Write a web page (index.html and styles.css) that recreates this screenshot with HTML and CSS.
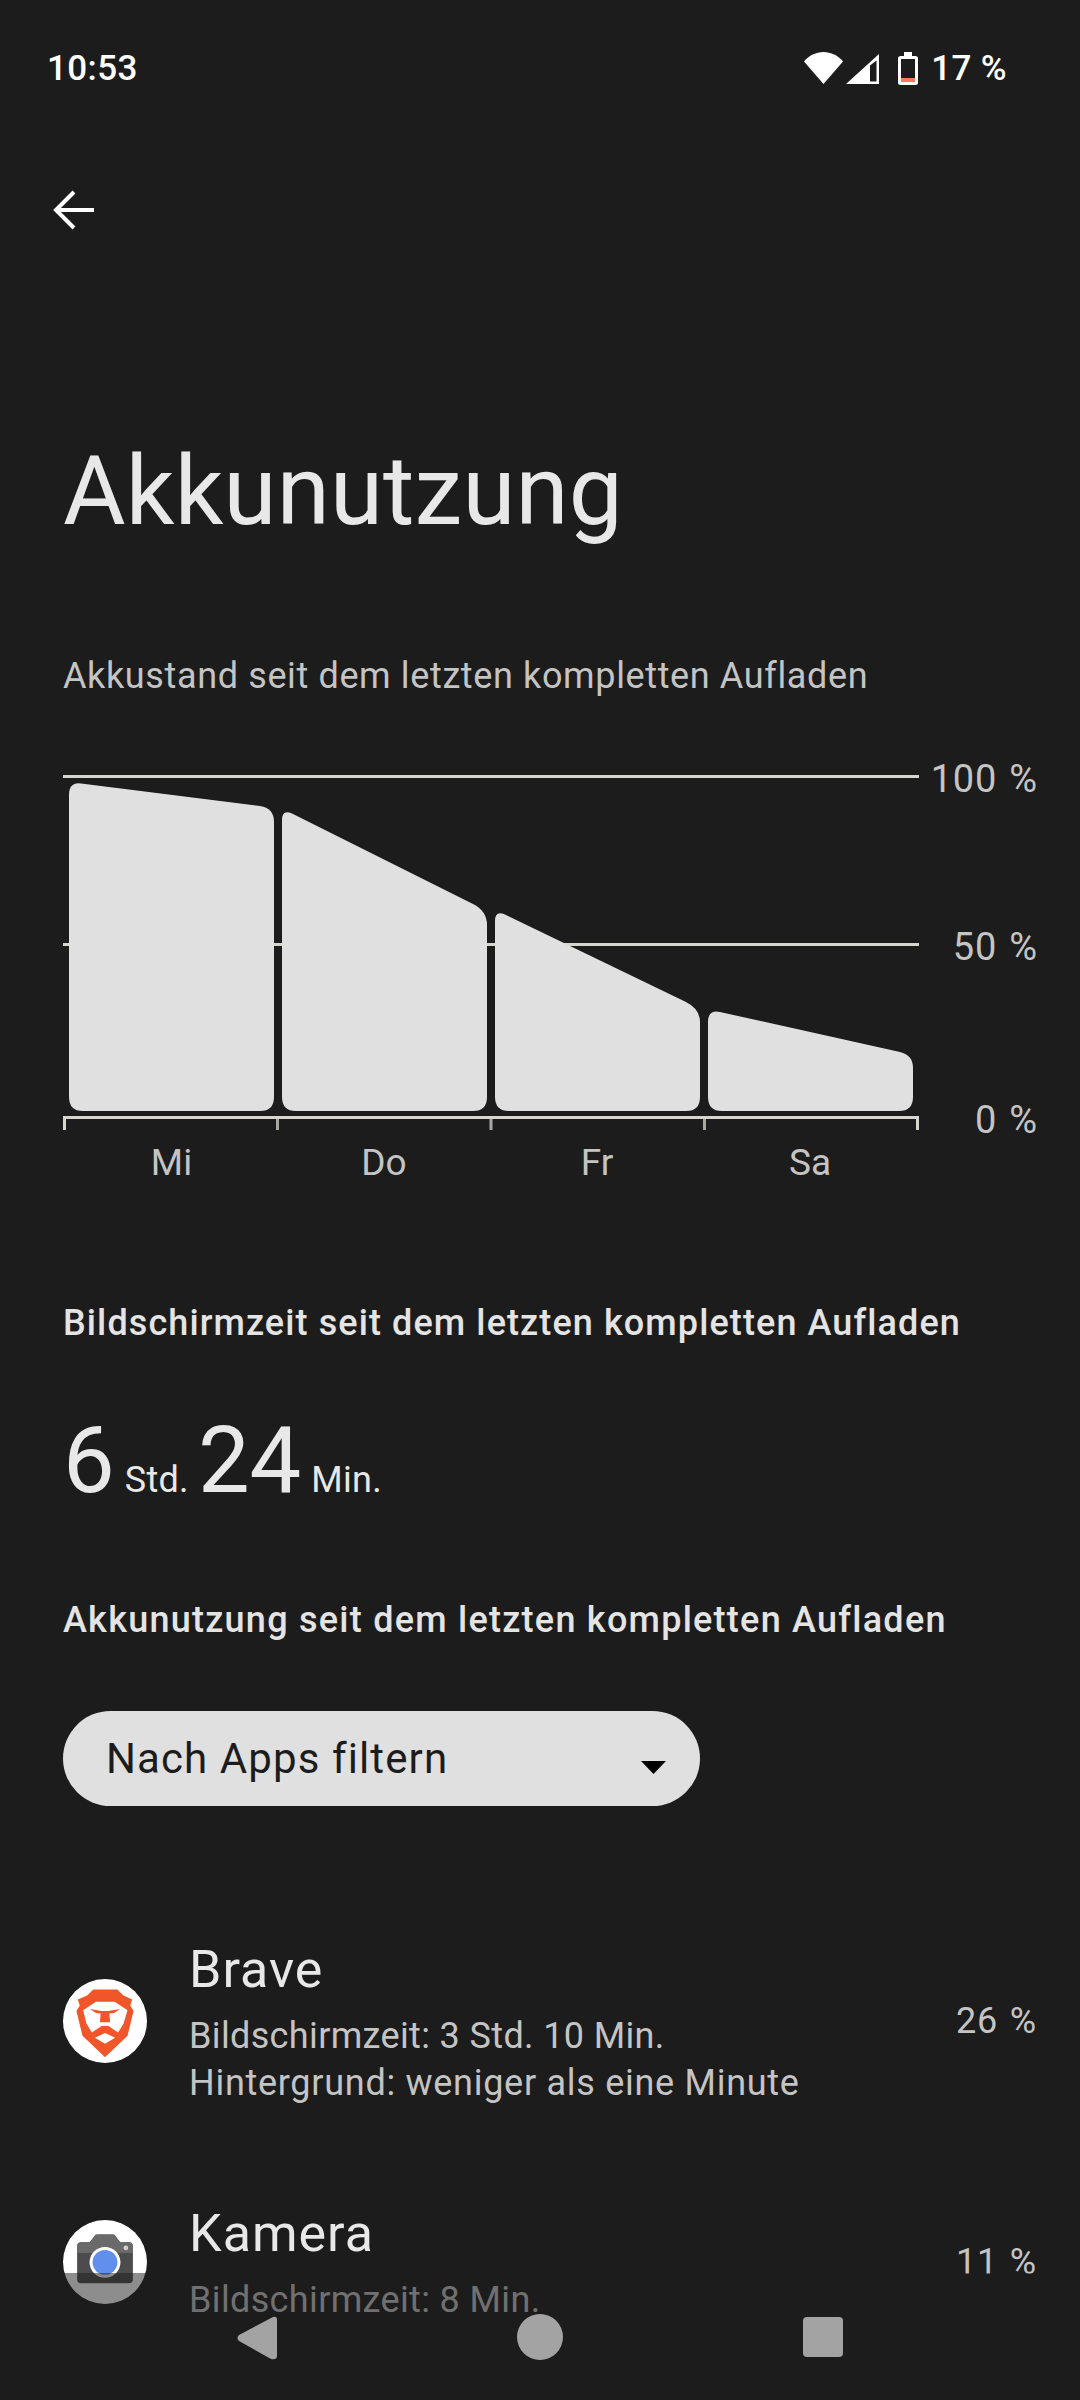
FILE: index.html
```html
<!DOCTYPE html>
<html lang="de">
<head>
  <meta charset="UTF-8">
  <meta name="viewport" content="width=device-width, initial-scale=1.0">
  <title>Akkunutzung</title>
  <link rel="stylesheet" href="styles.css">
</head>
<body>
  <div class="screen">
    <div class="status-bar">
      <span class="clock">10:53</span>
      <div class="status-icons">
        <svg class="wifi" width="39" height="34" viewBox="0 0 39 34"><path d="M0 10.5C5 4.500 12 1 19.500 1S34 4.500 39 10.500L19.500 33Z" fill="#fff"/></svg>
        <svg class="signal" width="33" height="34" viewBox="0 0 33 34"><path d="M0 33 33 3V33ZM24 14.500V30.500H30.500V9.500Z" fill="#fff" fill-rule="evenodd"/></svg>
        <svg class="battery" width="20" height="34" viewBox="0 0 20 34">
          <path d="M6 1h8v4h3.500A2.500 2.500 0 0 1 20 7.500v24a2.500 2.500 0 0 1-2.500 2.500h-15A2.500 2.500 0 0 1 0 31.500v-24A2.500 2.500 0 0 1 2.500 5H6Z" fill="#fff"/>
          <rect x="3" y="8" width="14" height="23" fill="#1c1c1c"/>
          <rect x="3" y="27" width="14" height="4" fill="#ff7a5c"/>
        </svg>
        <span class="battery-text">17 %</span>
      </div>
    </div>

    <div class="app-bar">
      <svg width="42" height="42" viewBox="0 0 42 42"><path d="M41 21H4M21 3 3 21l18 18" fill="none" stroke="#fff" stroke-width="4"/></svg>
    </div>

    <h1 class="title">Akkunutzung</h1>
    <p class="subtitle">Akkustand seit dem letzten kompletten Aufladen</p>

    <svg class="chart" width="980" height="446" viewBox="63 750 980 446">
      <g class="grid">
        <path d="M63 776.500H919M63 944.500H919M64.500 1130V1117.500H917.500V1130"/>
        <path class="tick" d="M277.500 1119V1130M491 1119V1130M704.500 1119V1130"/>
      </g>
      <g class="bars">
        <path d="M69 795Q69 782 81 783.500L260 806Q274 808 274 822V1097Q274 1111 260 1111H83Q69 1111 69 1097Z"/>
        <path d="M282 820Q282 809 292 813.500L473 904Q487 911 487 925V1097Q487 1111 473 1111H296Q282 1111 282 1097Z"/>
        <path d="M495 921Q495 910 505 914.500L686 1002Q700 1009 700 1022V1097Q700 1111 686 1111H509Q495 1111 495 1097Z"/>
        <path d="M708 1022Q708 1009 720 1012L900 1052Q913 1055 913 1068V1097Q913 1111 899 1111H722Q708 1111 708 1097Z"/>
      </g>
      <g class="axis-y">
        <text x="1038" y="792">100 %</text>
        <text x="1038" y="960">50 %</text>
        <text x="1038" y="1133">0 %</text>
      </g>
      <g class="axis-x">
        <text x="171.500" y="1175">Mi</text>
        <text x="384" y="1175">Do</text>
        <text x="597" y="1175">Fr</text>
        <text x="810" y="1175">Sa</text>
      </g>
    </svg>

    <h2 class="heading heading-screen">Bildschirmzeit seit dem letzten kompletten Aufladen</h2>
    <div class="screen-time">
      <span class="big">6</span><span class="unit">Std.</span><span class="big">24</span><span class="unit">Min.</span>
    </div>
    <h2 class="heading heading-usage">Akkunutzung seit dem letzten kompletten Aufladen</h2>

    <div class="filter">
      <span>Nach Apps filtern</span>
      <svg class="filter-arrow" width="25" height="13" viewBox="0 0 25 13"><path d="M0 0H25L12.500 13Z" fill="#000"/></svg>
    </div>

    <div class="app-list">
      <div class="app-row">
        <svg class="app-icon" width="84" height="84" viewBox="70 57 250 250">
          <circle cx="195" cy="182" r="125" fill="#fff"/>
          <path d="M160 88H232L250 106 276 118 270 136 280 152 262 226 195 290 128 226 110 152 120 136 114 118 142 106Z" fill="#f1562a"/>
          <path d="M130 150 168 125H224L262 150 250 190 234 216 205 197H185L156 216 140 190Z" fill="#fff"/>
          <path d="M150 146 185 152H205L240 146 222 158 208 160 210 186H180L182 160 168 158Z" fill="#f1562a"/>
          <path d="M165 232 195 218 225 232 195 250Z" fill="#fff"/>
        </svg>
        <div class="app-info">
          <div class="app-name">Brave</div>
          <div class="app-detail app-time">Bildschirmzeit: 3 Std. 10 Min.</div>
          <div class="app-detail">Hintergrund: weniger als eine Minute</div>
        </div>
        <div class="app-percent">26 %</div>
      </div>
      <div class="app-row">
        <svg class="app-icon" width="84" height="84" viewBox="70 57 250 250">
          <circle cx="195" cy="182" r="125" fill="#fff"/>
          <path d="M112 135Q112 123 124 123H150L165 103Q167 100 172 100H218Q223 100 225 103L240 123H266Q278 123 278 135V233Q278 245 266 245H124Q112 245 112 233Z" fill="#4c4c4c"/>
          <path d="M112 155V135Q112 123 124 123H150L165 103Q167 100 172 100H218Q223 100 225 103L240 123H266Q278 123 278 135V155Z" fill="#6a6a6a"/>
          <circle cx="257" cy="140" r="7" fill="#d0d0d0"/>
          <circle cx="195" cy="183" r="46" fill="#fff"/>
          <circle cx="195" cy="183" r="37" fill="#6090ec"/>
        </svg>
        <div class="app-info">
          <div class="app-name">Kamera</div>
          <div class="app-detail app-time">Bildschirmzeit: 8 Min.</div>
        </div>
        <div class="app-percent">11 %</div>
      </div>
    </div>

    <div class="nav-scrim"></div>
    <div class="nav-bar">
      <svg class="nav-back" width="40" height="44" viewBox="0 0 40 44"><path d="M36 1 2 19Q-1 22 2 25L34 43Q40 44 40 40V4Q40 0 36 1Z" fill="#a3a3a3"/></svg>
      <div class="nav-home"></div>
      <div class="nav-recent"></div>
    </div>
  </div>
</body>
</html>
```

FILE: styles.css
```css
body {
  margin: 0;
  background-color: #1c1c1c;
  font-family: Roboto, "Noto Sans", sans-serif;
  color: #c4c4c4;
}
h1, h2, p {
  margin: 0;
  font-weight: 400;
}
.screen {
  position: relative;
  height: 2400px;
  overflow: hidden;
  padding: 0 37px 0 63px;
  box-sizing: border-box;
}

/* status bar */
.status-bar {
  display: flex;
  justify-content: space-between;
  align-items: center;
  height: 136px;
  margin: 0 36px 0 -16px;
  color: #fff;
  font-size: 35px;
  font-weight: 500;
  letter-spacing: 0.4px;
}
.status-icons {
  display: flex;
  align-items: center;
}
.signal {
  margin-left: 3px;
}
.battery {
  margin-left: 19px;
}
.battery-text {
  margin-left: 13px;
}

.app-bar {
  display: flex;
  align-items: center;
  height: 148px;
  margin-left: -10px;
}

.title {
  margin-top: 147px;
  font-size: 96px;
  line-height: 120px;
  letter-spacing: 0.2px;
  color: #e8e8e8;
}
.subtitle {
  margin-top: 100px;
  font-size: 36px;
  line-height: 50px;
  letter-spacing: 0.63px;
}

/* chart */
.chart {
  display: block;
  margin-top: 49px;
}
.grid path {
  fill: none;
  stroke: #d6d6ce;
  stroke-width: 3;
}
.grid .tick {
  stroke: #a8a8a2;
}
.bars path {
  fill: #e0e0e0;
}
.chart text {
  fill: #c4c4c4;
}
.axis-y text {
  font-size: 38px;
  letter-spacing: 0.8px;
  word-spacing: 2px;
  text-anchor: end;
}
.axis-x text {
  font-size: 37px;
  text-anchor: middle;
}

.heading {
  font-size: 36px;
  font-weight: 500;
  line-height: 50px;
  letter-spacing: 1.1px;
  color: #e4e4e4;
}
.heading-screen {
  margin-top: 102px;
}
.heading-usage {
  margin-top: 55px;
  letter-spacing: 1.25px;
}

.screen-time {
  display: flex;
  align-items: baseline;
  margin-top: 53px;
  line-height: 120px;
  color: #e8e8e8;
}
.big {
  font-size: 92px;
}
.unit {
  margin: 0 9px 0 10px;
  font-size: 36px;
  letter-spacing: 0.3px;
}

/* filter pill */
.filter {
  display: flex;
  justify-content: space-between;
  align-items: center;
  width: 637px;
  height: 95px;
  margin-top: 66px;
  padding: 0 34px 0 43px;
  box-sizing: border-box;
  border-radius: 48px;
  background-color: #e0e0e0;
  color: #1c1c1c;
  font-size: 42px;
  letter-spacing: 1.1px;
}
.filter-arrow {
  margin-top: 18px;
}

/* app list */
.app-list {
  margin-top: 134px;
  margin-right: 6px;
}
.app-row {
  display: flex;
  align-items: center;
  margin-bottom: 97px;
}
.app-icon {
  flex: none;
  margin-right: 42px;
  margin-bottom: 5px;
}
.app-info {
  flex: 1;
}
.app-name {
  margin-bottom: 13px;
  font-size: 52px;
  line-height: 60px;
  letter-spacing: 1px;
  color: #e8e8e8;
}
.app-detail {
  font-size: 36px;
  line-height: 47px;
  letter-spacing: 0.72px;
}
.app-time {
  letter-spacing: 0.36px;
}
.app-percent {
  margin-bottom: 5px;
  font-size: 36px;
  letter-spacing: 0.8px;
  word-spacing: 2px;
}

/* nav bar sits over the list */
.nav-scrim {
  position: absolute;
  left: 0;
  right: 0;
  top: 2273px;
  height: 40px;
  background-color: rgba(28, 28, 28, 0.5);
}
.nav-bar {
  position: absolute;
  left: 0;
  right: 0;
  top: 2313px;
  height: 87px;
  background-color: #1c1c1c;
}
.nav-back,
.nav-home,
.nav-recent {
  position: absolute;
}
.nav-back {
  left: 237px;
  top: 3px;
}
.nav-home {
  left: 517px;
  top: 1px;
  width: 46px;
  height: 46px;
  border-radius: 50%;
  background-color: #a3a3a3;
}
.nav-recent {
  left: 803px;
  top: 4px;
  width: 40px;
  height: 40px;
  border-radius: 4px;
  background-color: #a3a3a3;
}
```
